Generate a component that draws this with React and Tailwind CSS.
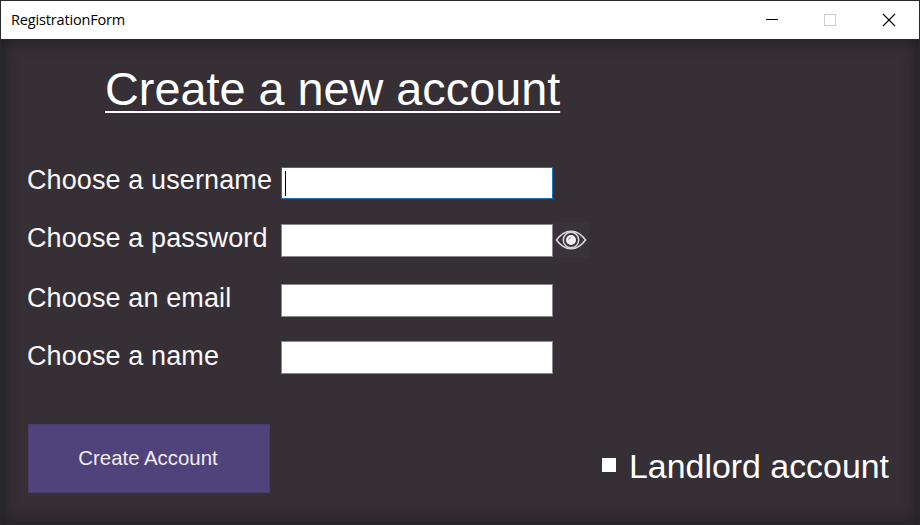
import React from "react";

function TitleBar() {
  return (
    <header className="flex h-[38px] shrink-0 items-center justify-between bg-white pl-[10px]">
      <span className="font-['Open_Sans',sans-serif] text-[14.500px] leading-5 tracking-[-0.160px] text-black">
        RegistrationForm
      </span>
      <div className="flex h-full items-center">
        <svg className="h-[38px] w-[58px]" viewBox="0 0 58 38" shapeRendering="crispEdges">
          <rect x="23" y="18" width="12" height="1" fill="#000" />
        </svg>
        <svg className="h-[38px] w-[58px]" viewBox="0 0 58 38" shapeRendering="crispEdges">
          <rect x="23.5" y="13.5" width="11" height="11" fill="none" stroke="#ccc" />
        </svg>
        <svg className="h-[38px] w-[60px]" viewBox="0 0 60 38">
          <path d="M24 13l12 12M36 13l-12 12" stroke="#000" strokeWidth="1.1" />
        </svg>
      </div>
    </header>
  );
}

function EyeIcon() {
  return (
    <svg className="h-[22px] w-[32px]" viewBox="0 0 32 22" fill="none" stroke="#dcd9dc">
      <path d="M1.500 11C6 4.800 11 2.200 16 2.200S26 4.800 30.500 11C26 17.200 21 19.800 16 19.800S6 17.200 1.500 11Z" strokeWidth="1.600" />
      <circle cx="16" cy="11" r="7.700" strokeWidth="1.500" />
      <circle cx="16" cy="11" r="5" fill="#f4f2f4" stroke="none" />
      <path d="M13.700 10.700a2.400 2.400 0 0 1 2-2.100" stroke="#777278" strokeWidth="0.900" />
    </svg>
  );
}

function Field({ label, focused, reveal, className, labelClass }) {
  return (
    <div className={`flex h-[33px] items-start ${className}`}>
      <label
        className={`w-[254px] shrink-0 whitespace-nowrap text-[27px] leading-[31px] tracking-[0.110px] text-[#fbfafb] ${labelClass}`}
      >
        {label}
      </label>
      <div
        className={
          focused
            ? "flex h-[32px] w-[272px] items-start border border-[#1673bd] bg-white pl-[3px] pt-[3px]"
            : "h-[33px] w-[272px] border border-[#8b888b] bg-white"
        }
      >
        {focused && <span className="h-[25px] w-px bg-black" />}
      </div>
      {reveal && (
        <button className="-mt-[2px] flex h-[36px] w-[36px] items-center bg-[#39333a] pl-[2px]">
          <EyeIcon />
        </button>
      )}
    </div>
  );
}

export default function App() {
  return (
    <div className="flex h-[525px] w-[920px] flex-col overflow-hidden border border-[#2b282b] bg-[#362f36] font-['Liberation_Sans',Arial,sans-serif]">
      <TitleBar />
      <main className="flex flex-1 flex-col pl-[26px] shadow-[inset_0_0_16px_2px_rgba(20,20,20,0.6)]">
        <h1 className="ml-[78px] mt-[23px] h-[54px] whitespace-nowrap text-[46.800px] leading-[54px] text-white underline decoration-2 underline-offset-[6px]">
          Create a new account
        </h1>
        <Field label="Choose a username" focused className="mt-[51px]" labelClass="-mt-[2px]" />
        <Field label="Choose a password" reveal className="mt-[24px]" labelClass="-mt-[1px]" />
        <Field label="Choose an email" className="mt-[27px]" labelClass="-mt-[1px]" />
        <Field label="Choose a name" className="mt-[24px]" labelClass="mt-0" />
        <div className="mt-[50px] flex items-start">
          <button className="ml-px h-[69px] w-[242px] border border-[#4b3e6d] bg-[#50427a] pr-[2px] text-[20.400px] text-[#f0edf5]">
            Create Account
          </button>
          <label className="ml-[332px] mt-[23px] flex items-start whitespace-nowrap">
            <span className="mt-[11px] size-[14px] bg-white" />
            <span className="ml-[13px] text-[33.900px] leading-[39px] text-white">Landlord account</span>
          </label>
        </div>
      </main>
    </div>
  );
}
